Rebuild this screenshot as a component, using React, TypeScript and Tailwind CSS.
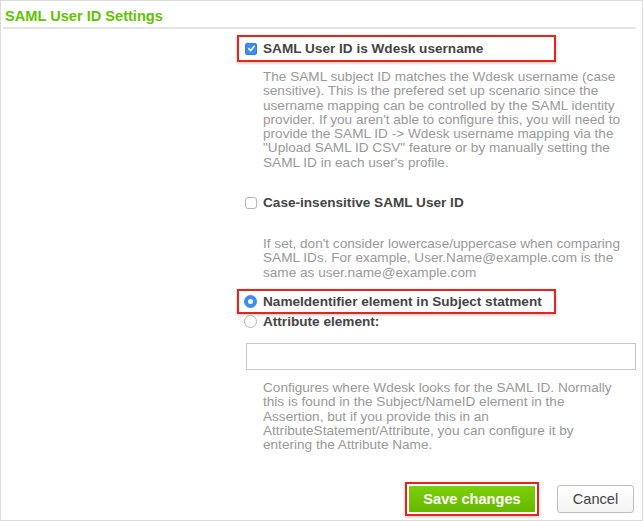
import React from 'react'

const desc = 'text-[13.6px] leading-[14.3px] text-[#999]'
const label = 'text-[13.6px] font-bold text-[#444] leading-none'

function CheckedBox() {
  return (
    <span className="flex items-center justify-center w-[12px] h-[12px] rounded-[3px] bg-[#3d8ef2] shadow-[inset_0_0_0_1px_#2f7de0]">
      <svg width="9" height="9" viewBox="0 0 10 10" fill="none">
        <path d="M2 5.2l2 2.2L8 2.6" stroke="white" strokeWidth={1.7} strokeLinecap="round" strokeLinejoin="round" />
      </svg>
    </span>
  )
}

function EmptyBox() {
  return <span className="block w-[12px] h-[12px] rounded-[3px] border border-[#b5b5b5] bg-white" />
}

function RadioOn() {
  return (
    <span className="flex items-center justify-center w-[13px] h-[13px] rounded-full bg-[#3d8ef2]">
      <span className="block w-[5px] h-[5px] rounded-full bg-white" />
    </span>
  )
}

function RadioOff() {
  return <span className="block w-[13px] h-[13px] rounded-full border border-[#b5b5b5] bg-white" />
}

export default function App() {
  return (
    <div className="w-[643px] h-[521px] bg-white border border-[#dcdcdc] font-['Liberation_Sans',Arial,sans-serif] overflow-hidden">
      <div className="pl-[4px] pt-[7px] text-[14.6px] leading-[17px] font-bold text-[#5fc300]">
        SAML User ID Settings
      </div>
      <div className="ml-[2px] mr-[6px] mt-[2px] h-[2px] bg-[#e4e4e4]" />

      <div className="pl-[236px] pr-[8px]">
        {/* option 1 */}
        <div className="mt-[6px] w-[319px] h-[27px] border-2 border-[#e2261c] shadow-[0_1px_3px_rgba(0,0,0,0.25)] flex items-center gap-[6px] pl-[6px]">
          <CheckedBox />
          <span className={label}>SAML User ID is Wdesk username</span>
        </div>
        <p className={`${desc} mt-[8px] ml-[26px] w-[362px]`}>
          The SAML subject ID matches the Wdesk username (case sensitive). This is the prefered set up
          scenario since the username mapping can be controlled by the SAML identity provider. If you
          aren't able to configure this, you will need to provide the SAML ID -&gt; Wdesk username mapping
          via the "Upload SAML ID CSV" feature or by manually setting the SAML ID in each user's profile.
        </p>

        {/* option 2 */}
        <div className="mt-[19px] h-[27px] flex items-center gap-[6px] pl-[8px]">
          <EmptyBox />
          <span className={label}>Case-insensitive SAML User ID</span>
        </div>
        <p className={`${desc} mt-[21px] ml-[26px] w-[362px]`}>
          If set, don't consider lowercase/uppercase when comparing SAML IDs. For example,
          User.Name@example.com is the same as user.name@example.com
        </p>

        {/* radios */}
        <div className="mt-[9px] w-[319px] h-[25px] border-2 border-[#e2261c] shadow-[0_1px_3px_rgba(0,0,0,0.25)] flex items-center gap-[6px] pl-[5px]">
          <RadioOn />
          <span className={label}>NameIdentifier element in Subject statment</span>
        </div>
        <div className="h-[16px] flex items-center gap-[6px] pl-[7px]">
          <RadioOff />
          <span className={label}>Attribute element:</span>
        </div>
        <input
          type="text"
          className="block mt-[13px] ml-[9px] w-[390px] h-[27px] border border-[#c8c8c8] bg-white outline-none"
        />
        <p className={`${desc} mt-[11px] ml-[26px] w-[362px]`}>
          Configures where Wdesk looks for the SAML ID. Normally this is found in the Subject/NameID
          element in the Assertion, but if you provide this in an AttributeStatement/Attribute, you can
          configure it by entering the Attribute Name.
        </p>

        <div className="mt-[30px] flex items-center justify-end gap-[18px]">
          <div className="border-2 border-[#e2261c] shadow-[0_1px_3px_rgba(0,0,0,0.25)] p-[2px]">
            <button className="w-[126px] h-[26px] bg-gradient-to-b from-[#7ccf0a] to-[#66b800] text-white text-[14.6px] font-bold">
              Save changes
            </button>
          </div>
          <button className="w-[77px] h-[28px] rounded-[3px] border border-[#bdbdbd] bg-gradient-to-b from-white to-[#f3f3f3] text-[14.6px] text-[#444]">
            Cancel
          </button>
        </div>
      </div>
    </div>
  )
}
